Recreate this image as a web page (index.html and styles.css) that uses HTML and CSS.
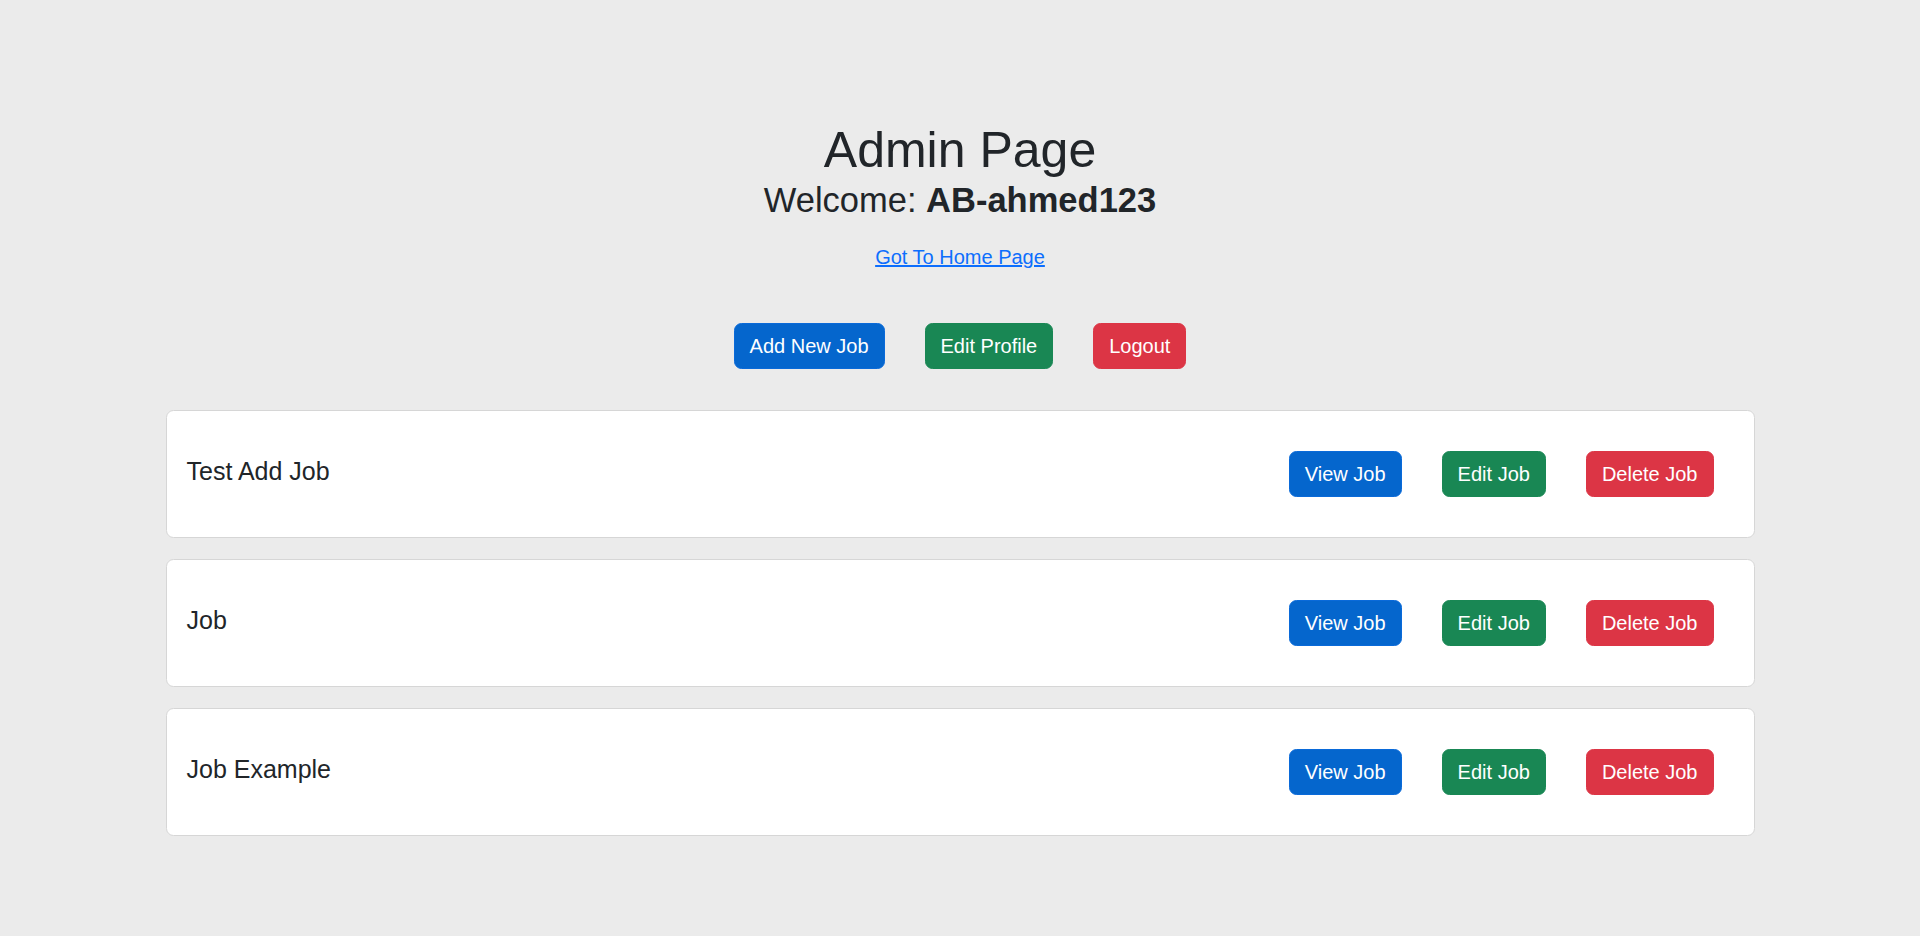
FILE: index.html
```html
<!DOCTYPE html>
<html lang="en">
<head>
<meta charset="utf-8">
<title>Admin Page</title>
<link rel="stylesheet" href="styles.css">
</head>
<body>
<div class="page">
  <header class="intro">
    <h1 class="title">Admin Page</h1>
    <h3 class="welcome">Welcome: <b>AB-ahmed123</b></h3>
    <p class="home"><a href="#">Got To Home Page</a></p>
  </header>
  <div class="actions">
    <a class="btn btn-blue" href="#">Add New Job</a>
    <a class="btn btn-green" href="#">Edit Profile</a>
    <a class="btn btn-red" href="#">Logout</a>
  </div>
  <div class="jobs">
    <div class="card">
      <h5 class="job-title">Test Add Job</h5>
      <div class="job-buttons">
        <a class="btn btn-blue" href="#">View Job</a>
        <a class="btn btn-green" href="#">Edit Job</a>
        <a class="btn btn-red" href="#">Delete Job</a>
      </div>
    </div>
    <div class="card">
      <h5 class="job-title">Job</h5>
      <div class="job-buttons">
        <a class="btn btn-blue" href="#">View Job</a>
        <a class="btn btn-green" href="#">Edit Job</a>
        <a class="btn btn-red" href="#">Delete Job</a>
      </div>
    </div>
    <div class="card">
      <h5 class="job-title">Job Example</h5>
      <div class="job-buttons">
        <a class="btn btn-blue" href="#">View Job</a>
        <a class="btn btn-green" href="#">Edit Job</a>
        <a class="btn btn-red" href="#">Delete Job</a>
      </div>
    </div>
  </div>
</div>
</body>
</html>
```
FILE: styles.css
```css
html, body {
  margin: 0;
  padding: 0;
}
body {
  background: #ebebeb;
  color: #212529;
  font-family: "Liberation Sans", Arial, sans-serif;
  font-size: 20px;
  line-height: 30px;
  min-height: 936px;
}
.page {
  width: 1589px;
  margin: 0 auto;
  padding-top: 120px;
}
.intro {
  text-align: center;
}
.title {
  margin: 0;
  font-size: 50px;
  line-height: 60px;
  font-weight: 400;
}
.welcome {
  margin: 0;
  font-size: 34.5px;
  line-height: 41px;
  font-weight: 400;
}
.welcome b {
  font-weight: 700;
}
.home {
  margin: 21px 0 0;
  font-size: 20px;
  line-height: 30px;
}
.home a {
  color: #0d6efd;
  text-decoration: underline;
}
.actions {
  display: flex;
  justify-content: center;
  margin-top: 31px;
}
.btn {
  display: inline-block;
  margin: 20px;
  padding: 7px 15px;
  border: 1px solid transparent;
  border-radius: 7.5px;
  color: #fff;
  font-size: 20px;
  line-height: 30px;
  text-decoration: none;
  white-space: nowrap;
}
.btn-blue {
  background: #0566cd;
  border-color: #0a6ad9;
}
.btn-green {
  background: #198754;
  border-color: #198754;
}
.btn-red {
  background: #dc3545;
  border-color: #dc3545;
}
.jobs {
  display: flex;
  flex-direction: column;
  gap: 21px;
  margin-top: 21px;
}
.card {
  display: flex;
  justify-content: space-between;
  align-items: center;
  background: #fff;
  border: 1px solid #d6d6d6;
  border-radius: 7.5px;
  padding: 20px;
}
.job-title {
  margin: 2px 0 8px;
  font-size: 25px;
  line-height: 30px;
  font-weight: 400;
}
.job-buttons {
  display: flex;
}
```
